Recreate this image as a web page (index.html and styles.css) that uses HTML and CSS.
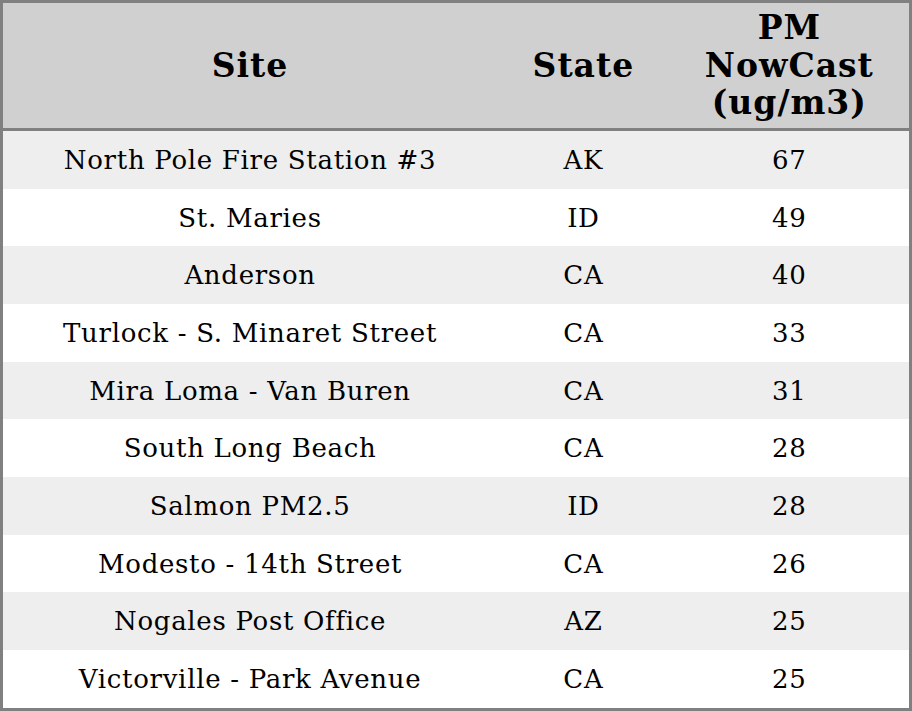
FILE: index.html
```html
<!DOCTYPE html>
<html>
<head>
<meta charset="utf-8">
<link rel="stylesheet" href="styles.css">
</head>
<body>
<table class="aq">
  <colgroup>
    <col class="c-site">
    <col class="c-state">
    <col class="c-pm">
  </colgroup>
  <thead>
    <tr><th>Site</th><th>State</th><th>PM<br>NowCast<br>(ug/m3)</th></tr>
  </thead>
  <tbody>
    <tr><td>North Pole Fire Station #3</td><td>AK</td><td>67</td></tr>
    <tr><td>St. Maries</td><td>ID</td><td>49</td></tr>
    <tr><td>Anderson</td><td>CA</td><td>40</td></tr>
    <tr><td>Turlock - S. Minaret Street</td><td>CA</td><td>33</td></tr>
    <tr><td>Mira Loma - Van Buren</td><td>CA</td><td>31</td></tr>
    <tr><td>South Long Beach</td><td>CA</td><td>28</td></tr>
    <tr><td>Salmon PM2.5</td><td>ID</td><td>28</td></tr>
    <tr><td>Modesto - 14th Street</td><td>CA</td><td>26</td></tr>
    <tr><td>Nogales Post Office</td><td>AZ</td><td>25</td></tr>
    <tr><td>Victorville - Park Avenue</td><td>CA</td><td>25</td></tr>
  </tbody>
</table>
</body>
</html>
```
FILE: styles.css
```css
html, body {
  margin: 0;
  padding: 0;
  background: #ffffff;
}
.aq {
  width: 912px;
  border-collapse: collapse;
  border: 3px solid #808080;
  font-family: "DejaVu Serif", serif;
  color: #000;
  table-layout: fixed;
}
.c-site { width: 494px; }
.c-state { width: 172px; }
.c-pm { width: 240px; }
.aq th {
  background: #d0d0d0;
  font-size: 33px;
  font-weight: bold;
  letter-spacing: 1px;
  line-height: 37.7px;
  padding: 5.95px 0;
  border-bottom: 3px solid #808080;
  text-align: center;
}
.aq td {
  font-size: 26px;
  letter-spacing: 0.7px;
  line-height: 28px;
  padding: 14.85px 0;
  text-align: center;
}
.aq tbody tr:nth-child(odd) td { background: #eeeeee; }
.aq tbody tr:nth-child(even) td { background: #ffffff; }
```
